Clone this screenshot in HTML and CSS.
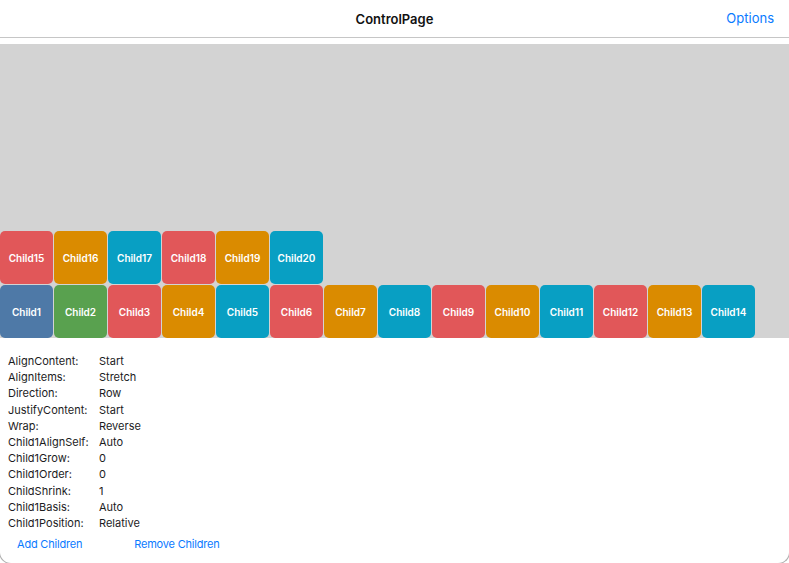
FILE: index.html
```html
<!DOCTYPE html>
<html>
<head>
<meta charset="utf-8">
<link rel="stylesheet" href="styles.css">
</head>
<body>
<div class="window">
  <header class="nav">
    <div class="title">ControlPage</div>
    <div class="options">Options</div>
  </header>
  <div class="flexbox">
    <div class="child blue">Child1</div>
    <div class="child green">Child2</div>
    <div class="child red">Child3</div>
    <div class="child orange">Child4</div>
    <div class="child cyan">Child5</div>
    <div class="child red">Child6</div>
    <div class="child orange">Child7</div>
    <div class="child cyan">Child8</div>
    <div class="child red">Child9</div>
    <div class="child orange">Child10</div>
    <div class="child cyan">Child11</div>
    <div class="child red">Child12</div>
    <div class="child orange">Child13</div>
    <div class="child cyan">Child14</div>
    <div class="child red">Child15</div>
    <div class="child orange">Child16</div>
    <div class="child cyan">Child17</div>
    <div class="child red">Child18</div>
    <div class="child orange">Child19</div>
    <div class="child cyan">Child20</div>
  </div>
  <div class="props">
    <span>AlignContent:</span><span>Start</span>
    <span>AlignItems:</span><span>Stretch</span>
    <span>Direction:</span><span>Row</span>
    <span>JustifyContent:</span><span>Start</span>
    <span>Wrap:</span><span>Reverse</span>
    <span>Child1AlignSelf:</span><span>Auto</span>
    <span>Child1Grow:</span><span>0</span>
    <span>Child1Order:</span><span>0</span>
    <span>ChildShrink:</span><span>1</span>
    <span>Child1Basis:</span><span>Auto</span>
    <span>Child1Position:</span><span>Relative</span>
  </div>
  <div class="actions">
    <span class="link">Add Children</span>
    <span class="link">Remove Children</span>
  </div>
</div>
</body>
</html>
```

FILE: styles.css
```css
html, body {
  margin: 0;
  padding: 0;
  background: #fff;
  overflow: hidden;
}
body {
  font-family: Inter, "Liberation Sans", sans-serif;
  color: #1c1c1e;
}
.window {
  margin: 0 -1px;
  height: 564px;
  border: 1px solid #b0b0b0;
  border-top: none;
  border-radius: 0 0 12px 12px;
  box-sizing: border-box;
  overflow: hidden;
}
.nav {
  height: 37px;
  border-bottom: 1px solid #c6c6c6;
  display: flex;
  align-items: center;
  justify-content: center;
  position: relative;
}
.title {
  font-size: 13px;
  font-weight: 600;
  color: #111;
}
.options {
  position: absolute;
  right: 15px;
  top: 10px;
  font-size: 13px;
  color: #0a7aff;
}
.flexbox {
  margin-top: 6px;
  height: 294px;
  background: #d3d3d3;
  display: flex;
  flex-wrap: wrap-reverse;
  align-content: flex-start;
}
.child {
  width: 53px;
  height: 53px;
  margin: 1px 1px 0 0;
  border-radius: 5px;
  display: flex;
  align-items: center;
  justify-content: center;
  color: #fff;
  font-size: 10px;
  font-weight: 600;
}
.blue { background: #4e79a7; }
.green { background: #59a14f; }
.red { background: #e15759; }
.orange { background: #da8b00; }
.cyan { background: #089fc3; }
.props {
  display: grid;
  grid-template-columns: 91px auto;
  padding: 15px 0 0 8px;
  font-size: 11px;
  line-height: 16.2px;
  color: #1c1c1e;
}
.actions {
  display: flex;
  gap: 52px;
  padding: 5px 0 0 17px;
  font-size: 11px;
  line-height: 16px;
  letter-spacing: -0.2px;
}
.link {
  color: #0a7aff;
}
```
